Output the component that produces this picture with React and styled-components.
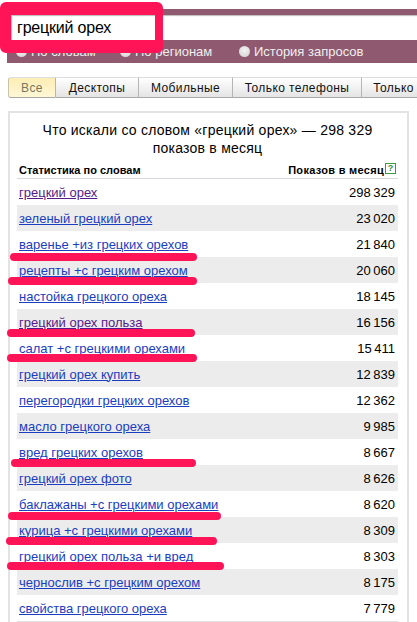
import React from "react";
import styled, { createGlobalStyle } from "styled-components";

const GlobalStyle = createGlobalStyle`
  html, body {
    margin: 0;
    padding: 0;
    background: #fff;
    overflow: hidden;
  }
  body {
    font-family: "Liberation Sans", Arial, sans-serif;
    color: #000;
  }
`;

const Page = styled.div`
  position: relative;
  width: 417px;
  height: 622px;
  overflow: hidden;
  padding-top: 9px;
  box-sizing: border-box;
`;

const SearchBar = styled.div`
  margin-left: 7px;
  height: 54px;
  box-sizing: border-box;
  padding: 6px 0 0 4px;
  background: #8f5a70;
`;

const SearchInput = styled.div`
  height: 25px;
  background: #fff;
  box-shadow: inset 1px 1px 1px #bbb;
  padding-left: 6px;
  font-size: 16px;
  letter-spacing: -0.2px;
  line-height: 25px;
`;

const SearchFrame = styled.div`
  position: absolute;
  left: 0;
  top: 2px;
  width: 163px;
  height: 51px;
  box-sizing: border-box;
  border-style: solid;
  border-color: #ff1458;
  border-width: 13px 8px 13px 11px;
  border-radius: 6px;
`;

const RadioRow = styled.div`
  display: flex;
  height: 23px;
  align-items: center;
  padding-left: 5px;
`;

const RadioItem = styled.label`
  display: flex;
  align-items: center;
  gap: 4px;
  flex: none;
  width: ${(p) => p.$width}px;
  font-size: 13px;
  white-space: nowrap;
  color: #eee;
`;

const RadioDot = styled.span`
  width: 11px;
  height: 11px;
  flex: none;
  border-radius: 50%;
  background: radial-gradient(circle at 50% 40%, #f4f4f4, #cfcfcf);
`;

const Tabs = styled.div`
  display: flex;
  margin: 14px 0 0 8px;
  height: 21px;
`;

const Tab = styled.div`
  width: ${(p) => p.$width}px;
  flex: none;
  box-sizing: border-box;
  text-align: center;
  font-size: 12px;
  letter-spacing: 0.4px;
  line-height: 20px;
  border-top: 1px solid #ddd;
  border-bottom: 1px solid #a8a8a8;
  border-right: 1px solid #b5b5b5;
  color: ${(p) => (p.$active ? "#77775f" : "#111")};
  background: ${(p) =>
    p.$active
      ? "linear-gradient(#fdeeb4, #fff6d6)"
      : "linear-gradient(#fff, #e4e4e4)"};
  ${(p) => p.$active && "border-left: 1px solid #c9c4a8; border-radius: 3px 0 0 3px;"}
`;

const Panel = styled.div`
  margin: 13px 0 0 8px;
  width: 401px;
  box-sizing: border-box;
  border: 2px solid #e3e3e3;
  border-bottom: 0;
  padding: 0 9px 0 7px;
`;

const Title = styled.div`
  padding-top: 8px;
  text-align: center;
  font-size: 14px;
  letter-spacing: 0.24px;
  line-height: 18px;
`;

const StatHeader = styled.div`
  display: flex;
  justify-content: space-between;
  align-items: flex-end;
  height: 22px;
  box-sizing: border-box;
  padding: 0 0 2px 2px;
  border-bottom: 1px solid #d8d8e0;
  font-size: 11px;
  font-weight: bold;
`;

const StatRight = styled.div`
  display: flex;
  align-items: center;
  gap: 1px;
  letter-spacing: 0.3px;
`;

const HelpIcon = styled.span`
  width: 9px;
  height: 9px;
  border: 1px solid #3f9a3f;
  color: #2f8f2f;
  font-size: 9px;
  line-height: 9px;
  letter-spacing: 0;
  text-align: center;
  margin-right: 2px;
  position: relative;
  top: -2px;
`;

const RowList = styled.div`
  border-bottom: 1px solid #e3e3e3;
`;

const Row = styled.div`
  position: relative;
  display: flex;
  justify-content: space-between;
  align-items: center;
  height: 26px;
  box-sizing: border-box;
  padding: 0 3px 0 2px;
  font-size: 13px;
  background: ${(p) => (p.$shaded ? "#ececec" : "transparent")};
`;

const QueryLink = styled.a`
  color: ${(p) => (p.$visited ? "#551a8b" : "#1a3dc1")};
  text-decoration: underline;
`;

const Count = styled.span`
  word-spacing: -1px;
`;

const Mark = styled.span`
  position: absolute;
  z-index: 1;
  left: ${(p) => p.$left}px;
  top: ${(p) => p.$top}px;
  width: ${(p) => p.$width}px;
  height: 8px;
  border-radius: 4px;
  background: #ff1458;
`;

const rows = [
  { q: "грецкий орех", n: "298 329", visited: true },
  { q: "зеленый грецкий орех", n: "23 020" },
  { q: "варенье +из грецких орехов", n: "21 840", mark: [-7, 22, 187] },
  { q: "рецепты +с грецким орехом", n: "20 060", mark: [-9, 20, 189] },
  { q: "настойка грецкого ореха", n: "18 145" },
  { q: "грецкий орех польза", n: "16 156", visited: true, mark: [-10, 20, 188] },
  { q: "салат +с грецкими орехами", n: "15 411", mark: [-10, 19, 190] },
  { q: "грецкий орех купить", n: "12 839" },
  { q: "перегородки грецких орехов", n: "12 362" },
  { q: "масло грецкого ореха", n: "9 985" },
  { q: "вред грецких орехов", n: "8 667", mark: [-6, 20, 185] },
  { q: "грецкий орех фото", n: "8 626" },
  { q: "баклажаны +с грецкими орехами", n: "8 620", mark: [-9, 21, 213] },
  { q: "курица +с грецкими орехами", n: "8 309", mark: [-11, 20, 211] },
  { q: "грецкий орех польза +и вред", n: "8 303", mark: [-10, 19, 217] },
  { q: "чернослив +с грецким орехом", n: "8 175" },
  { q: "свойства грецкого ореха", n: "7 779" },
];

const tabs = [
  { label: "Все", width: 48, active: true },
  { label: "Десктопы", width: 83 },
  { label: "Мобильные", width: 94 },
  { label: "Только телефоны", width: 129 },
  { label: "Только", width: 64 },
];

function App() {
  return (
    <Page>
      <GlobalStyle />
      <SearchBar>
        <SearchInput>грецкий орех</SearchInput>
        <RadioRow>
          <RadioItem $width={104}><RadioDot />По словам</RadioItem>
          <RadioItem $width={119}><RadioDot />По регионам</RadioItem>
          <RadioItem $width={130}><RadioDot />История запросов</RadioItem>
        </RadioRow>
      </SearchBar>
      <SearchFrame />
      <Tabs>
        {tabs.map((t) => (
          <Tab key={t.label} $width={t.width} $active={t.active}>{t.label}</Tab>
        ))}
      </Tabs>
      <Panel>
        <Title>
          Что искали со словом «грецкий орех» — 298 329
          <br />
          показов в месяц
        </Title>
        <StatHeader>
          <span>Статистика по словам</span>
          <StatRight>
            <span>Показов в месяц</span>
            <HelpIcon>?</HelpIcon>
          </StatRight>
        </StatHeader>
        <RowList>
          {rows.map((r, i) => (
            <Row key={r.q} $shaded={i % 2 === 1}>
              <QueryLink $visited={r.visited}>{r.q}</QueryLink>
              <Count>{r.n}</Count>
              {r.mark && <Mark $left={r.mark[0]} $top={r.mark[1]} $width={r.mark[2]} />}
            </Row>
          ))}
        </RowList>
      </Panel>
    </Page>
  );
}

export default App;
